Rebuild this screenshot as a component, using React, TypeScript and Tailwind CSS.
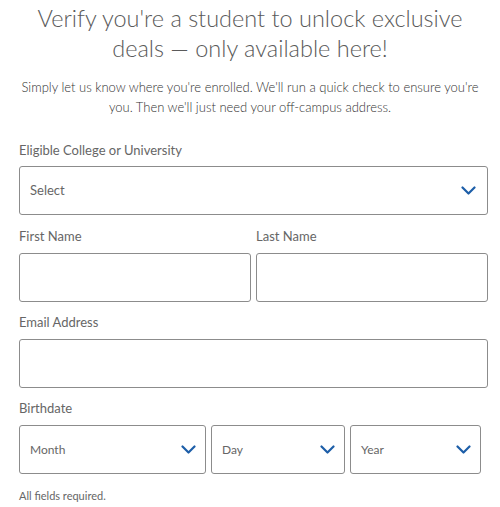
const font = { fontFamily: "Lato, 'Open Sans', sans-serif" };

function Chevron() {
  return (
    <svg width="15" height="9" viewBox="0 0 15 9" fill="none" className="shrink-0">
      <path d="M1.5 1.5 L7.5 7.5 L13.5 1.5" stroke="#1d5ea8" strokeWidth="2.2" strokeLinecap="round" strokeLinejoin="round" />
    </svg>
  );
}

function SelectBox({ label, className = "", small = false }: { label: string; className?: string; small?: boolean }) {
  return (
    <div className={`h-[49px] border border-[#8c8c8c] rounded-[3px] flex items-center justify-between pl-[10px] ${className}`}>
      <span className={`${small ? "text-[12px]" : "text-[13px]"} text-[#666]`}>{label}</span>
      <Chevron />
    </div>
  );
}

export default function App() {
  return (
    <div className="w-[500px] h-[507px] bg-white overflow-hidden" style={font}>
      <h1 className="pt-[3px] text-center text-[23.5px] leading-[30px] font-light text-[#5a5a5a] px-[30px]">
        Verify you're a student to unlock exclusive deals — only available here!
      </h1>
      <p className="mt-[14px] text-center text-[13px] leading-[20px] font-light text-[#333] px-[14px]">
        Simply let us know where you're enrolled. We'll run a quick check to ensure you're you. Then we'll just need your off-campus address.
      </p>

      <div className="pl-[19px] pr-[12px] mt-[23px] text-[#666]">
        <label className="block text-[13px] leading-[20px]">Eligible College or University</label>
        <SelectBox label="Select" className="mt-[6px] pr-[11px]" />

        <div className="mt-[11px] flex gap-[5px]">
          <div className="flex-1">
            <label className="block text-[13px] leading-[20px]">First Name</label>
            <div className="mt-[7px] h-[49px] border border-[#8c8c8c] rounded-[3px]" />
          </div>
          <div className="flex-1">
            <label className="block text-[13px] leading-[20px]">Last Name</label>
            <div className="mt-[7px] h-[49px] border border-[#8c8c8c] rounded-[3px]" />
          </div>
        </div>

        <label className="mt-[10px] block text-[13px] leading-[20px]">Email Address</label>
        <div className="mt-[7px] h-[49px] border border-[#8c8c8c] rounded-[3px]" />

        <label className="mt-[10px] block text-[13px] leading-[20px]">Birthdate</label>
        <div className="mt-[7px] flex gap-[5px] pr-[7px]">
          <SelectBox label="Month" small className="w-[187px] pr-[9px]" />
          <SelectBox label="Day" small className="w-[134px] pr-[9px]" />
          <SelectBox label="Year" small className="flex-1 pr-[9px]" />
        </div>

        <p className="mt-[12px] text-[11px] leading-[20px]">All fields required.</p>
      </div>
    </div>
  );
}
